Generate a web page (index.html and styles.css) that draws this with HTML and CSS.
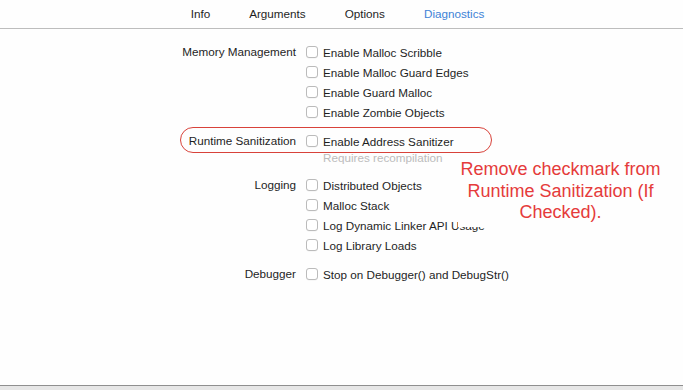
FILE: index.html
```html
<!DOCTYPE html>
<html>
<head>
<meta charset="utf-8">
<link rel="stylesheet" href="styles.css">
</head>
<body>
<div class="window">
  <nav class="tabs">
    <span class="tab">Info</span>
    <span class="tab">Arguments</span>
    <span class="tab">Options</span>
    <span class="tab active">Diagnostics</span>
  </nav>
  <main class="content">
    <section class="group">
      <div class="label">Memory Management</div>
      <div class="options">
        <label class="opt"><span class="box"></span>Enable Malloc Scribble</label>
        <label class="opt"><span class="box"></span>Enable Malloc Guard Edges</label>
        <label class="opt"><span class="box"></span>Enable Guard Malloc</label>
        <label class="opt"><span class="box"></span>Enable Zombie Objects</label>
      </div>
    </section>
    <section class="group runtime">
      <div class="oval"></div>
      <div class="label">Runtime Sanitization</div>
      <div class="options">
        <label class="opt"><span class="box"></span>Enable Address Sanitizer</label>
        <div class="note">Requires recompilation</div>
      </div>
    </section>
    <section class="group">
      <div class="label">Logging</div>
      <div class="options">
        <label class="opt"><span class="box"></span>Distributed Objects</label>
        <label class="opt"><span class="box"></span>Malloc Stack</label>
        <label class="opt"><span class="box"></span>Log Dynamic Linker API Usage</label>
        <label class="opt"><span class="box"></span>Log Library Loads</label>
      </div>
    </section>
    <section class="group">
      <div class="label">Debugger</div>
      <div class="options">
        <label class="opt"><span class="box"></span>Stop on Debugger() and DebugStr()</label>
      </div>
    </section>
  </main>
  <div class="annotation">Remove checkmark from Runtime Sanitization (If Checked).</div>
  <footer class="bottom"></footer>
</div>
</body>
</html>
```
FILE: styles.css
```css
* { box-sizing: border-box; }
html, body {
  margin: 0;
  padding: 0;
  background: #fefefe;
}
body {
  font-family: "Liberation Sans", Arial, sans-serif;
  font-size: 11.7px;
  color: #1e1e1e;
}
.window {
  width: 683px;
  height: 390px;
  display: flex;
  flex-direction: column;
  overflow: hidden;
  position: relative;
}
.tabs {
  height: 29px;
  border-bottom: 1px solid #bdbdbd;
  display: flex;
  justify-content: center;
  align-items: center;
  gap: 39px;
  padding-right: 8px;
  padding-bottom: 1px;
}
.tab { color: #1e1e1e; }
.tab.active { color: #3d82d6; }
.content {
  flex: 1;
  padding-top: 13px;
  display: flex;
  flex-direction: column;
  gap: 9px;
}
.group {
  display: grid;
  grid-template-columns: 296px auto;
  column-gap: 10px;
  position: relative;
}
.label {
  text-align: right;
  height: 20px;
  line-height: 20px;
}
.options {
  display: flex;
  flex-direction: column;
}
.opt {
  height: 20px;
  display: flex;
  align-items: center;
  gap: 5px;
}
.box {
  width: 12px;
  height: 12px;
  border: 1px solid #bbbbbb;
  border-radius: 3px;
  background: #fff;
  box-shadow: 0 0.5px 0.5px rgba(0,0,0,0.06);
}
.note {
  padding-left: 17px;
  height: 15px;
  line-height: 13px;
  color: #bcbcbc;
}
.oval {
  position: absolute;
  left: 180px;
  top: -4px;
  width: 312px;
  height: 26px;
  border: 1.3px solid #d8423a;
  border-radius: 13px;
}
.annotation {
  position: absolute;
  left: 458px;
  top: 159px;
  width: 205px;
  padding-bottom: 3px;
  text-align: center;
  font-size: 18px;
  line-height: 21.5px;
  color: #e53b3b;
  background: #fefefe;
}
.bottom {
  height: 5px;
  border-top: 1px solid #8f8f8f;
  background: #e6e6e6;
}
```
